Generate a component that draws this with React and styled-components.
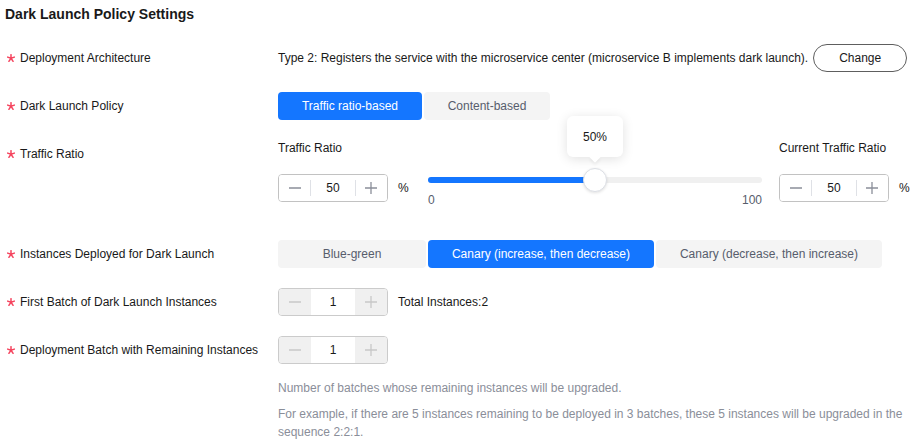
import React from 'react';
import styled, { createGlobalStyle } from 'styled-components';

const Global = createGlobalStyle`
  html, body { margin: 0; padding: 0; background: #fff; }
  body { font-family: "Liberation Sans", Arial, sans-serif; font-size: 12px; color: #191919; }
  * { box-sizing: border-box; }
`;

const Page = styled.div`
  width: 918px;
  height: 442px;
  overflow: hidden;
  padding-top: 4px;
`;

const Title = styled.h2`
  margin: 0 0 20px 5px;
  font-size: 14px;
  font-weight: bold;
  line-height: 20px;
  color: #191919;
`;

const Row = styled.div`
  display: flex;
  align-items: flex-start;
  margin-bottom: ${p => (p.$mb ?? 20)}px;
`;

const Label = styled.div`
  width: 278px;
  flex-shrink: 0;
  height: 28px;
  padding-left: 7px;
  display: flex;
  align-items: center;
  gap: 5px;
  line-height: 16px;
`;

const Value = styled.div`
  display: flex;
  flex-direction: ${p => (p.$column ? 'column' : 'row')};
  align-items: ${p => (p.$column ? 'flex-start' : 'center')};
  min-height: 28px;
`;

const Text = styled.span`
  line-height: 16px;
  margin-left: ${p => p.$ml || 0}px;
`;

const ChangeButton = styled.button`
  margin-left: 5px;
  width: 94px;
  height: 28px;
  border: 1px solid #5e5e5e;
  border-radius: 14px;
  background: #fff;
  font: inherit;
  color: #191919;
  padding: 0;
`;

const Segments = styled.div`
  display: flex;
  gap: 2px;
`;

const SegButton = styled.button`
  width: ${p => p.$w}px;
  height: 28px;
  border: none;
  border-radius: 4px;
  padding: 0;
  font: inherit;
  background: ${p => (p.$active ? '#1476ff' : '#f4f4f4')};
  color: ${p => (p.$active ? '#fff' : '#575d6c')};
`;

const Group = styled.div`
  display: flex;
  flex-direction: column;
  width: ${p => (p.$w ? `${p.$w}px` : 'auto')};
  margin-left: ${p => p.$ml || 0}px;
  flex-shrink: 0;
`;

const SubLabel = styled.div`
  line-height: 16px;
  margin-bottom: 18px;
  color: #191919;
`;

const InlineRow = styled.div`
  display: flex;
  align-items: center;
`;

const NumberBox = styled.div`
  display: flex;
  width: 110px;
  height: 28px;
  border: 1px solid ${p => (p.$disabled ? '#cbcbcb' : '#c2c2c2')};
  border-radius: 4px;
  overflow: hidden;
  background: #fff;
`;

const StepBtn = styled.div`
  width: 32px;
  height: 100%;
  display: flex;
  align-items: center;
  justify-content: center;
  position: relative;
  background: ${p => (p.$disabled ? '#f0f0f0' : '#fff')};
  &::after {
    content: '';
    display: ${p => (p.$disabled ? 'none' : 'block')};
    position: absolute;
    top: 5px;
    bottom: 5px;
    ${p => (p.$side === 'left' ? 'right: 0;' : 'left: 0;')}
    width: 1px;
    background: #dfe1e6;
  }
`;

const NumValue = styled.div`
  flex: 1;
  display: flex;
  align-items: center;
  justify-content: center;
  color: #191919;
`;

const SliderWrap = styled.div`
  width: 334px;
  margin-top: 28px;
  flex-shrink: 0;
`;

const SliderRail = styled.div`
  position: relative;
  height: 24px;
`;

const Track = styled.div`
  position: absolute;
  left: 0;
  right: 0;
  top: 9px;
  height: 6px;
  border-radius: 3px;
  background: #f0f0f0;
`;

const Fill = styled.div`
  position: absolute;
  left: 0;
  top: 0;
  bottom: 0;
  border-radius: 3px;
  background: #1476ff;
`;

const Thumb = styled.div`
  position: absolute;
  top: 0;
  width: 24px;
  height: 24px;
  margin-left: -12px;
  border-radius: 50%;
  background: #fff;
  border: 1px solid #dcdfe5;
  box-shadow: 0 1px 3px rgba(0, 0, 0, 0.12);
`;

const Tip = styled.div`
  position: absolute;
  bottom: 35px;
  width: 56px;
  height: 41px;
  margin-left: -28px;
  background: #fff;
  border-radius: 6px;
  box-shadow: 0 2px 12px rgba(0, 0, 0, 0.12);
  display: flex;
  align-items: center;
  justify-content: center;
  color: #191919;
  &::after {
    content: '';
    position: absolute;
    left: 50%;
    bottom: -4px;
    width: 8px;
    height: 8px;
    margin-left: -4px;
    background: #fff;
    transform: rotate(45deg);
    box-shadow: 2px 2px 3px rgba(0, 0, 0, 0.05);
  }
`;

const Ticks = styled.div`
  display: flex;
  justify-content: space-between;
  line-height: 16px;
  color: #575d6c;
`;

const Hint = styled.p`
  margin: ${p => p.$mt}px 0 0 0;
  line-height: 18px;
  color: #8a8e99;
  width: 640px;
`;

const Star = () => (
  <svg width="8" height="8" viewBox="0 0 14 14" aria-hidden="true">
    <g stroke="#f5445e" strokeWidth="2.6" strokeLinecap="round">
      <line x1="7" y1="7.5" x2="7" y2="1.2" />
      <line x1="7" y1="7.5" x2="12.8" y2="5.4" />
      <line x1="7" y1="7.5" x2="10.7" y2="12.8" />
      <line x1="7" y1="7.5" x2="3.3" y2="12.8" />
      <line x1="7" y1="7.5" x2="1.2" y2="5.4" />
    </g>
  </svg>
);

const Minus = ({ color }) => (
  <svg width="12" height="12" viewBox="0 0 12 12">
    <line x1="0" y1="6" x2="12" y2="6" stroke={color} strokeWidth="1.3" />
  </svg>
);

const Plus = ({ color }) => (
  <svg width="12" height="12" viewBox="0 0 12 12">
    <line x1="0" y1="6" x2="12" y2="6" stroke={color} strokeWidth="1.3" />
    <line x1="6" y1="0" x2="6" y2="12" stroke={color} strokeWidth="1.3" />
  </svg>
);

const NumberInput = ({ value, disabled }) => {
  const c = disabled ? '#c8c8c8' : '#8a8e99';
  return (
    <NumberBox $disabled={disabled}>
      <StepBtn $disabled={disabled} $side="left"><Minus color={c} /></StepBtn>
      <NumValue>{value}</NumValue>
      <StepBtn $disabled={disabled} $side="right"><Plus color={c} /></StepBtn>
    </NumberBox>
  );
};

const FieldLabel = ({ children }) => (
  <Label><Star /><span>{children}</span></Label>
);

export default function App() {
  const ratio = 50;
  return (
    <>
      <Global />
      <Page>
        <Title>Dark Launch Policy Settings</Title>

        <Row>
          <FieldLabel>Deployment Architecture</FieldLabel>
          <Value>
            <Text>Type 2: Registers the service with the microservice center (microservice B implements dark launch).</Text>
            <ChangeButton>Change</ChangeButton>
          </Value>
        </Row>

        <Row>
          <FieldLabel>Dark Launch Policy</FieldLabel>
          <Segments>
            <SegButton $w={144} $active>Traffic ratio-based</SegButton>
            <SegButton $w={126}>Content-based</SegButton>
          </Segments>
        </Row>

        <Row $mb={32}>
          <FieldLabel>Traffic Ratio</FieldLabel>
          <Group $w={150}>
            <SubLabel>Traffic Ratio</SubLabel>
            <InlineRow>
              <NumberInput value={ratio} />
              <Text $ml={10}>%</Text>
            </InlineRow>
          </Group>
          <SliderWrap>
            <SliderRail>
              <Track>
                <Fill style={{ width: `${ratio}%` }} />
              </Track>
              <Tip style={{ left: `${ratio}%` }}>{ratio}%</Tip>
              <Thumb style={{ left: `${ratio}%` }} />
            </SliderRail>
            <Ticks><span>0</span><span>100</span></Ticks>
          </SliderWrap>
          <Group $ml={17}>
            <SubLabel>Current Traffic Ratio</SubLabel>
            <InlineRow>
              <NumberInput value={ratio} />
              <Text $ml={10}>%</Text>
            </InlineRow>
          </Group>
        </Row>

        <Row>
          <FieldLabel>Instances Deployed for Dark Launch</FieldLabel>
          <Segments>
            <SegButton $w={148}>Blue-green</SegButton>
            <SegButton $w={226} $active>Canary (increase, then decrease)</SegButton>
            <SegButton $w={226}>Canary (decrease, then increase)</SegButton>
          </Segments>
        </Row>

        <Row>
          <FieldLabel>First Batch of Dark Launch Instances</FieldLabel>
          <Value>
            <NumberInput value={1} disabled />
            <Text $ml={10}>Total Instances:2</Text>
          </Value>
        </Row>

        <Row $mb={0}>
          <FieldLabel>Deployment Batch with Remaining Instances</FieldLabel>
          <Value $column>
            <NumberInput value={1} disabled />
            <Hint $mt={15}>Number of batches whose remaining instances will be upgraded.</Hint>
            <Hint $mt={8}>For example, if there are 5 instances remaining to be deployed in 3 batches, these 5 instances will be upgraded in the sequence 2:2:1.</Hint>
          </Value>
        </Row>
      </Page>
    </>
  );
}
